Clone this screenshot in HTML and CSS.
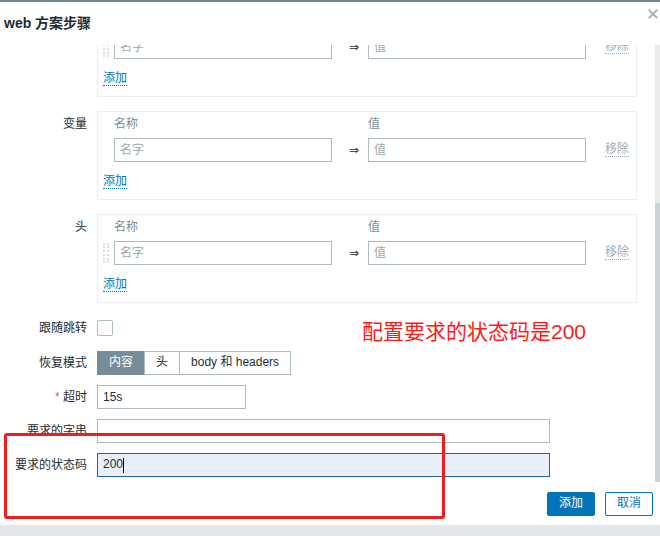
FILE: index.html
```html
<!DOCTYPE html>
<html lang="zh-CN">
<head>
<meta charset="utf-8">
<title>web 方案步骤</title>
<link rel="stylesheet" href="styles.css">
</head>
<body>
<div class="dialog">
  <div class="dlg-head">
    <h1 class="title">web 方案步骤</h1>
    <button class="close" type="button" aria-label="关闭">
      <svg width="10" height="10" viewBox="0 0 10 10"><path d="M1.5 1.5L8.5 8.5M8.5 1.5L1.5 8.5" stroke="#a7b9c5" stroke-width="2.2" stroke-linecap="square"/></svg>
    </button>
  </div>

  <div class="body">
    <div class="scroll">
      <div class="row row-box">
        <div class="lbl"></div>
        <div class="box">
          <div class="pairs">
            <span></span><span class="hd">名称</span><span></span><span class="hd">值</span><span></span>
            <span class="drag"></span><input class="txt" placeholder="名字"><span class="arrow">⇒</span><input class="txt" placeholder="值"><span class="remove"><span>移除</span></span>
          </div>
          <div class="add"><a class="link">添加</a></div>
        </div>
      </div>

      <div class="row row-box">
        <div class="lbl">变量</div>
        <div class="box">
          <div class="pairs">
            <span></span><span class="hd">名称</span><span></span><span class="hd">值</span><span></span>
            <span></span><input class="txt" placeholder="名字"><span class="arrow">⇒</span><input class="txt" placeholder="值"><span class="remove"><span>移除</span></span>
          </div>
          <div class="add"><a class="link">添加</a></div>
        </div>
      </div>

      <div class="row row-box">
        <div class="lbl">头</div>
        <div class="box">
          <div class="pairs">
            <span></span><span class="hd">名称</span><span></span><span class="hd">值</span><span></span>
            <span class="drag"></span><input class="txt" placeholder="名字"><span class="arrow">⇒</span><input class="txt" placeholder="值"><span class="remove"><span>移除</span></span>
          </div>
          <div class="add"><a class="link">添加</a></div>
        </div>
      </div>

      <div class="row row-check">
        <div class="lbl">跟随跳转</div>
        <div class="cell"><span class="check"></span></div>
      </div>

      <div class="row row-mode">
        <div class="lbl">恢复模式</div>
        <div class="cell">
          <div class="seg">
            <button type="button" class="on">内容</button><button type="button">头</button><button type="button">body 和 headers</button>
          </div>
        </div>
      </div>

      <div class="row row-field">
        <div class="lbl"><span class="req">*</span> 超时</div>
        <div class="cell"><input class="txt w-short" value="15s"></div>
      </div>

      <div class="row row-field">
        <div class="lbl">要求的字串</div>
        <div class="cell"><input class="txt w-long" value=""></div>
      </div>

      <div class="row row-field">
        <div class="lbl">要求的状态码</div>
        <div class="cell"><div class="field focus w-long">200<span class="caret"></span></div></div>
      </div>
    </div>
    <div class="scrollbar"><div class="thumb"></div></div>
  </div>

  <div class="foot">
    <button type="button" class="btn">添加</button>
    <button type="button" class="btn btn-alt">取消</button>
  </div>

  <div class="annot-text">配置要求的状态码是200</div>
  <div class="annot-box"></div>
</div>
</body>
</html>
```

FILE: styles.css
```css
* { box-sizing: border-box; }
html, body { margin: 0; }
body {
  width: 660px;
  height: 536px;
  overflow: hidden;
  background: linear-gradient(#cdd3d7, #e4e7e9);
  font: 12px/1.3 "Liberation Sans", Arial, "Noto Sans CJK SC", sans-serif;
  color: #1f2c33;
}
.dialog {
  position: relative;
  width: 660px;
  height: 525px;
  background: #fff;
  border-top: 2px solid #6c8898;
  display: flex;
  flex-direction: column;
}
.dlg-head {
  flex: none;
  height: 43px;
  display: flex;
  align-items: center;
  padding-left: 4px;
}
.title {
  margin: 0;
  font-size: 14px;
  font-weight: bold;
  color: #1f2c33;
}
.close {
  margin-left: auto;
  align-self: flex-start;
  margin-top: 7px;
  margin-right: 2px;
  padding: 0;
  border: 0;
  background: none;
  width: 10px;
  height: 10px;
  display: block;
}
.close svg { display: block; }

.body {
  flex: none;
  height: 437px;
  display: flex;
}
.scroll {
  flex: 1;
  overflow: hidden;
  display: flex;
  flex-direction: column;
  justify-content: flex-end;
  padding-bottom: 5px;
}
.scrollbar {
  width: 5px;
  background: #ebebeb;
  display: flex;
  flex-direction: column;
  justify-content: flex-end;
}
.thumb { height: 279px; background: #cad3d8; }

.row {
  flex: none;
  display: grid;
  grid-template-columns: 87px 1fr;
  column-gap: 10px;
}
.lbl {
  text-align: right;
  line-height: 24px;
  white-space: nowrap;
  color: #1f2c33;
}
.req { color: #e45959; }
.row-box .lbl { line-height: 16px; padding-top: 5px; }
.row-box + .row-box { margin-top: 14px; }
.row-check { margin-top: 13px; }
.row-mode { margin-top: 11px; }
.row-field { margin-top: 10px; }
.cell { display: flex; align-items: center; min-height: 24px; }

.box {
  width: 540px;
  border: 1px solid #ebeef0;
  padding: 4px 5px 10px;
}
.pairs {
  display: grid;
  grid-template-columns: 11px 218px 36px 218px auto;
  row-gap: 6px;
  align-items: center;
}
.hd { color: #768d99; line-height: 16px; }
.drag {
  width: 6px;
  height: 20px;
  border-left: 2px dotted #d8dfe3;
  border-right: 2px dotted #d8dfe3;
}
.txt {
  display: block;
  height: 24px;
  width: 100%;
  border: 1px solid #acbbc2;
  border-radius: 0;
  padding: 0 5px;
  font: inherit;
  color: #1f2c33;
  background: #fff;
  outline: none;
  margin: 0;
}
.txt::placeholder { color: #9ea8ad; }
.arrow {
  text-align: right;
  padding-right: 9px;
  font-family: "DejaVu Sans", sans-serif;
  font-size: 12px;
  line-height: 16px;
  color: #1f2c33;
}
.remove { padding-left: 19px; color: #a3adb4; }
.remove span { border-bottom: 1px dotted #a3adb4; }
.add { margin-top: 11px; line-height: 16px; }
.link {
  color: #0275b8;
  text-decoration: none;
  border-bottom: 1px dotted #0275b8;
}

.check {
  width: 16px;
  height: 16px;
  border: 1px solid #acbbc2;
  border-radius: 2px;
  background: #fff;
}
.seg { display: flex; }
.seg button {
  height: 24px;
  padding: 0 11px;
  border: 1px solid #acbbc2;
  background: #fff;
  font: inherit;
  color: #1f2c33;
  margin: 0 0 0 -1px;
  border-radius: 0;
}
.seg button:first-child { margin-left: 0; }
.seg button.on {
  background: #768d99;
  border-color: #768d99;
  color: #fff;
}
.w-short { width: 149px; }
.w-long { width: 453px; }
.field {
  height: 24px;
  border: 1px solid #acbbc2;
  padding: 0 5px;
  display: flex;
  align-items: center;
}
.field.focus {
  border-color: #1c65a1;
  background: #e8effb;
}
.caret {
  display: inline-block;
  width: 1px;
  height: 15px;
  background: #000;
}

.foot {
  flex: none;
  display: flex;
  justify-content: flex-end;
  gap: 10px;
  padding: 10px 7px 9px;
}
.btn {
  height: 24px;
  padding: 0 11px;
  border: 1px solid #0275b8;
  background: #0275b8;
  color: #fff;
  font: inherit;
  border-radius: 2px;
  margin: 0;
}
.btn-alt { background: #fff; color: #0275b8; }

.annot-text {
  position: absolute;
  left: 362px;
  top: 317px;
  font-family: "Liberation Sans", "Noto Sans CJK SC", sans-serif;
  font-size: 21px;
  line-height: 26px;
  color: #ff1a1a;
  white-space: nowrap;
}
.annot-box {
  position: absolute;
  left: 4px;
  top: 431px;
  width: 441px;
  height: 86px;
  border: 3px solid #f21c1c;
  border-radius: 3px;
}
```
